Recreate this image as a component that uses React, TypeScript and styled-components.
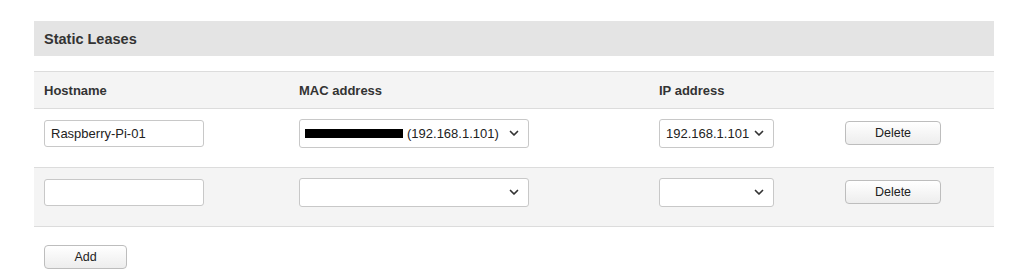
import { styled, createGlobalStyle } from "styled-components";

const GlobalStyle = createGlobalStyle`
  body {
    margin: 0;
    background: #fff;
    font-family: "Liberation Sans", Arial, sans-serif;
    color: #333;
  }
`;

const Page = styled.div`
  padding: 21px 30px 0 34px;
`;

const TitleBar = styled.div`
  height: 35px;
  background-color: #e4e4e4;
  display: flex;
  align-items: center;
  padding: 0 10px;
  font-size: 14.5px;
  font-weight: 700;
  color: #333;
`;

const Table = styled.div`
  margin-top: 15px;
  border-top: solid 1px #dcdcdc;
`;

const Row = styled.div<{ $head?: boolean; $shade?: boolean }>`
  box-sizing: border-box;
  display: grid;
  grid-template-columns: 255px 360px 186px 1fr;
  align-items: ${(p) => (p.$head ? "center" : "start")};
  padding: ${(p) => (p.$head ? "0 10px" : "10px 10px 0")};
  height: ${(p) => (p.$head ? "37px" : "59px")};
  background-color: ${(p) => (p.$shade ? "#f4f4f4" : "#fff")};
  border-bottom: solid 1px #dcdcdc;
`;

const HeadCell = styled.div`
  font-size: 13px;
  font-weight: 700;
  color: #333;
`;

const TextInput = styled.div`
  box-sizing: border-box;
  width: 160px;
  height: 27px;
  margin-top: 1px;
  border: solid 1px #c8c8c8;
  border-radius: 3px;
  background: #fff;
  padding: 0 6px;
  display: flex;
  align-items: center;
  font-size: 13px;
  color: #222;
`;

const SelectBox = styled.div<{ $width: number; $pad?: number }>`
  box-sizing: border-box;
  width: ${(p) => p.$width}px;
  height: 29px;
  border: solid 1px #c8c8c8;
  border-radius: 3px;
  background: #fff;
  padding: 0 9px 0 ${(p) => p.$pad ?? 5}px;
  display: flex;
  align-items: center;
  font-size: 13px;
  color: #222;
  white-space: nowrap;
`;

const SelectValue = styled.span`
  flex: 1;
  display: flex;
  align-items: center;
  gap: 4px;
`;

const Redacted = styled.span`
  display: inline-block;
  width: 98px;
  height: 9px;
  background: #000;
`;

const Button = styled.button<{ $width: number }>`
  box-sizing: border-box;
  width: ${(p) => p.$width}px;
  height: 24px;
  margin-top: 2px;
  border: solid 1px #bdbdbd;
  border-radius: 4px;
  background: linear-gradient(#ffffff, #ededed);
  font-family: "Liberation Sans", Arial, sans-serif;
  font-size: 12.5px;
  color: #222;
  padding: 0;
  cursor: pointer;
`;

const Footer = styled.div`
  padding: 16px 10px 0;
`;

const Chevron = () => (
  <svg width="10" height="7" viewBox="0 0 10 7">
    <path d="M1.5 1.5 L5 5 L8.5 1.5" fill="none" stroke="#333" strokeWidth="1.7" strokeLinecap="round" strokeLinejoin="round" />
  </svg>
);

export default function App() {
  return (
    <>
      <GlobalStyle />
      <Page>
        <TitleBar>Static Leases</TitleBar>
        <Table>
          <Row $head $shade>
            <HeadCell>Hostname</HeadCell>
            <HeadCell>MAC address</HeadCell>
            <HeadCell>IP address</HeadCell>
            <div />
          </Row>
          <Row>
            <TextInput>Raspberry-Pi-01</TextInput>
            <SelectBox $width={230}>
              <SelectValue>
                <Redacted />
                (192.168.1.101)
              </SelectValue>
              <Chevron />
            </SelectBox>
            <SelectBox $width={115} $pad={6}>
              <SelectValue>192.168.1.101</SelectValue>
              <Chevron />
            </SelectBox>
            <Button $width={96}>Delete</Button>
          </Row>
          <Row $shade>
            <TextInput />
            <SelectBox $width={230}>
              <SelectValue />
              <Chevron />
            </SelectBox>
            <SelectBox $width={115}>
              <SelectValue />
              <Chevron />
            </SelectBox>
            <Button $width={96}>Delete</Button>
          </Row>
        </Table>
        <Footer>
          <Button $width={83}>Add</Button>
        </Footer>
      </Page>
    </>
  );
}
